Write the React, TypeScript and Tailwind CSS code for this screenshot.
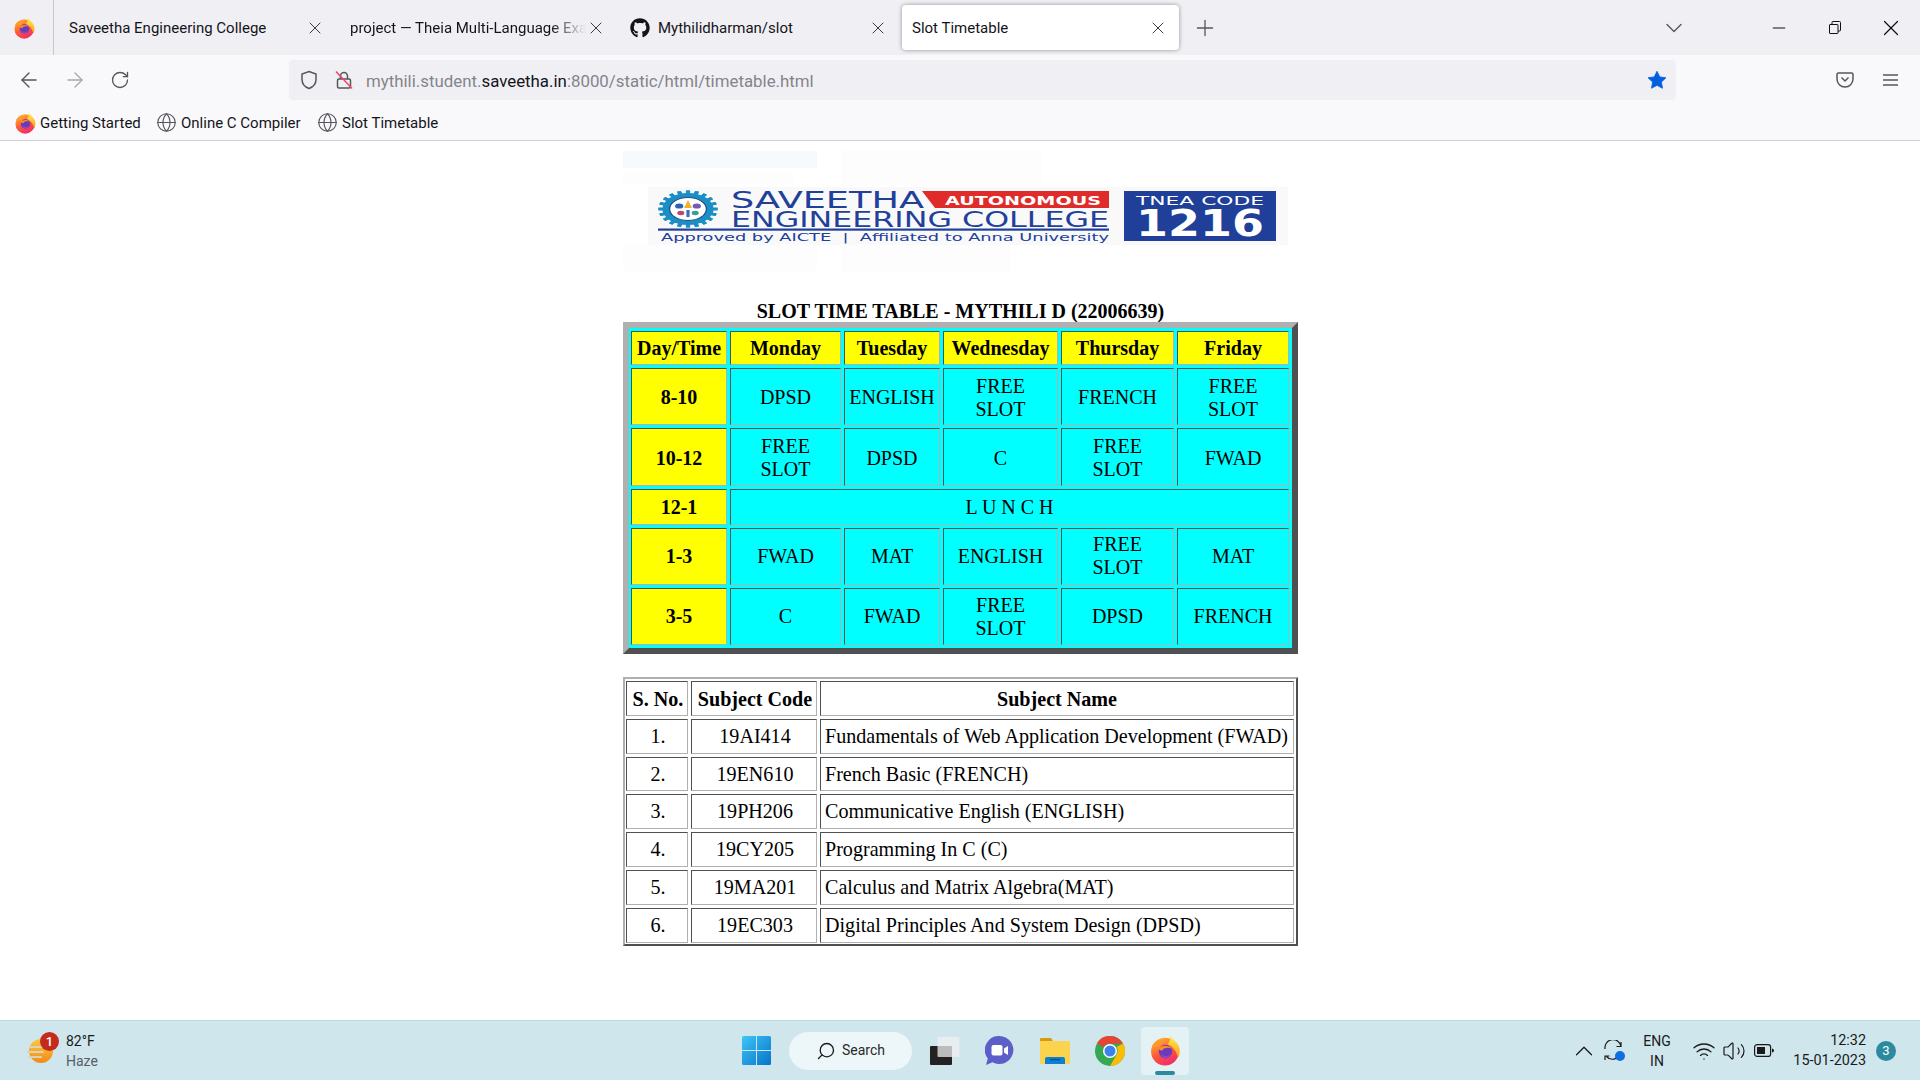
import { ArrowLeft, ArrowRight, RotateCw, X, Plus, ChevronDown, Minus, Globe, Search, ChevronUp, Wifi, Volume2 } from "lucide-react";
import { FaGithub } from "react-icons/fa";
import { Fragment } from "react";

function FF({ s = 20, id }: { s?: number; id: string }) {
  return (
    <svg width={s} height={s} viewBox="0 0 32 32" className="shrink-0">
      <defs>
        <linearGradient id={id + "a"} x1="0.2" y1="0" x2="0.7" y2="1">
          <stop offset="0" stopColor="#ffbd2e" />
          <stop offset="0.5" stopColor="#ff5a36" />
          <stop offset="1" stopColor="#ee2a6b" />
        </linearGradient>
        <linearGradient id={id + "b"} x1="0" y1="0" x2="0" y2="1">
          <stop offset="0" stopColor="#fff44f" />
          <stop offset="1" stopColor="#ff9d1e" />
        </linearGradient>
      </defs>
      <circle cx="15.5" cy="18" r="13.5" fill={`url(#${id}a)`} />
      <path d="M20 1c1 4 5 6 8 10 3 5 2 11 0 13-1-6-5-11-10-13 3-3 3-7 2-10z" fill={`url(#${id}b)`} />
      <path d="M3 12c3-4 8-6 12-5-3 2-4 4-4 6-3 0-6 0-8-1z" fill="#ff9a2e" />
      <circle cx="16" cy="18" r="6.5" fill="#6a3bb8" />
      <path d="M9 15c3-3 10-4 13 0-3-1-8-1-9 2-2 0-3-1-4-2z" fill="#ff8a1f" />
      <path d="M12 20c2 3 7 3 9 0 0 3-3 5-5 5s-4-2-4-5z" fill="#9c3fc6" />
    </svg>
  );
}

function Tab({ title, active, icon, cls, fade }: { title: string; active?: boolean; icon?: boolean; cls: string; fade?: boolean }) {
  return (
    <div className={`flex items-center h-[45px] w-[277px] shrink-0 rounded ${active ? "bg-white shadow-[0_0_4px_rgba(0,0,0,0.4)]" : ""} ${cls}`}>
      {icon && <FaGithub className="w-[20px] h-[20px] mr-[8px] text-[#15141a] shrink-0" />}
      <span className={`flex-1 whitespace-nowrap overflow-hidden text-[15px] pt-[2px] text-[#15141a] ${fade ? "[mask-image:linear-gradient(to_right,black_85%,transparent_100%)]" : ""}`}>{title}</span>
      <X className="w-[20px] h-[20px] shrink-0 text-[#2a2a2e]" strokeWidth={1.1} />
    </div>
  );
}

function Logo() {
  const blue = "#21409a";
  const teeth = Array.from({ length: 20 }, (_, i) => i * 18);
  return (
    <svg width="675" height="125" viewBox="0 0 675 125" className="block shrink-0">
      <rect x="0" y="1" width="194" height="17" fill="#f6fafd" />
      <rect x="0" y="22" width="170" height="12" fill="#fdfdfd" />
      <rect x="0" y="95" width="194" height="26" fill="#fdfdfe" />
      <rect x="218" y="0" width="200" height="36" fill="#fdfdfe" />
      <rect x="218" y="95" width="170" height="28" fill="#fdfdfe" />
      <rect x="25" y="37" width="640" height="58" fill="#f9f9fa" />
      <g transform="translate(65 59) scale(1.6 1)">
        {teeth.map((a) => (
          <rect key={a} x="-1.300" y="-18.500" width="2.600" height="37" fill="#1b8fc4" transform={`rotate(${a})`} />
        ))}
        <circle r="16" fill="#1b8fc4" />
        <circle r="11.500" fill="#fff" />
        <circle r="11.500" fill="none" stroke="#1c4f8f" strokeWidth="0.8" />
        <circle cx="-5.500" cy="-3" r="2.600" fill="#2a62b8" />
        <circle cx="5.500" cy="-3" r="2.600" fill="#6f5db5" />
        <path d="M0 -9l2.500 8h-5z" fill="#f0b429" />
        <circle cx="-4.500" cy="4" r="2.200" fill="#c0476a" />
        <path d="M-1 1h2v7h-2z" fill="#3a6fc0" />
        <circle cx="4.500" cy="4" r="2.200" fill="#3a9f8f" />
      </g>
      <path d="M299 41h187v17H312z" fill="#e02b2b" />
      <g fontFamily="'DejaVu Sans', sans-serif">
        <text x="108" y="58" fontSize="23" fill={blue} textLength="193" lengthAdjust="spacingAndGlyphs">SAVEETHA</text>
        <text x="322" y="54.500" fontSize="12.600" fontWeight="700" fill="#fff" textLength="156" lengthAdjust="spacingAndGlyphs">AUTONOMOUS</text>
        <text x="108" y="76.500" fontSize="21" fill={blue} textLength="378" lengthAdjust="spacingAndGlyphs">ENGINEERING COLLEGE</text>
        <text x="38" y="91" fontSize="10.500" fill={blue} textLength="448" lengthAdjust="spacingAndGlyphs" className="whitespace-pre">Approved by AICTE  |  Affiliated to Anna University</text>
      </g>
      <rect x="35" y="78.500" width="451" height="2.200" fill={blue} />
      <rect x="501" y="41" width="152" height="50" fill="#1f3f98" />
      <g fontFamily="'DejaVu Sans', sans-serif" fill="#fff">
        <text x="513" y="55" fontSize="12.500" textLength="128" lengthAdjust="spacingAndGlyphs">TNEA CODE</text>
        <text x="513" y="86" fontSize="37" fontWeight="700" textLength="128" lengthAdjust="spacingAndGlyphs">1216</text>
      </g>
    </svg>
  );
}

const tCell = "border border-t-[#505050] border-l-[#505050] border-r-[#b0b0b0] border-b-[#b0b0b0] p-0 text-center";
const head = ["Day/Time", "Monday", "Tuesday", "Wednesday", "Thursday", "Friday"];
const FS = "FREE SLOT";
const rows: { h: string; pad: string; time: string; cells: string[] }[] = [
  { h: "h-[57px]", pad: "pt-[2px]", time: "8-10", cells: ["DPSD", "ENGLISH", FS, "FRENCH", FS] },
  { h: "h-[58px]", pad: "pt-[2px]", time: "10-12", cells: [FS, "DPSD", "C", FS, "FWAD"] },
  { h: "h-[36px]", pad: "", time: "12-1", cells: [] },
  { h: "h-[57px]", pad: "", time: "1-3", cells: ["FWAD", "MAT", "ENGLISH", FS, "MAT"] },
  { h: "h-[57px]", pad: "", time: "3-5", cells: ["C", "FWAD", FS, "DPSD", "FRENCH"] },
];

function Timetable() {
  return (
    <div className="w-[675px] h-[332px] border-[6px] border-t-[#b0b0b0] border-l-[#b0b0b0] border-r-[#505050] border-b-[#505050] bg-[#00ffff]">
      <table className="table-fixed border-separate border-spacing-[3px] w-[664px] -ml-px text-[20px] leading-[23px] text-black">
        <colgroup>
          <col className="w-[96px]" />
          <col className="w-[111px]" />
          <col className="w-[96px]" />
          <col className="w-[115px]" />
          <col className="w-[113px]" />
          <col className="w-[112px]" />
        </colgroup>
        <tbody>
          <tr>
            {head.map((h) => (
              <th key={h} className={`${tCell} h-[34px] bg-[#ffff00] font-bold whitespace-nowrap`}>{h}</th>
            ))}
          </tr>
          {rows.map((r) => (
            <tr key={r.time}>
              <th className={`${tCell} ${r.h} ${r.pad} bg-[#ffff00] font-bold`}>{r.time}</th>
              {r.time === "12-1" ? (
                <td colSpan={5} className={tCell}>L U N C H</td>
              ) : (
                r.cells.map((c, i) => (
                  <td key={i} className={`${tCell} ${r.pad} ${r.time === "1-3" && c === FS ? "pb-[2px]" : ""}`}>
                    {c === FS ? (
                      <Fragment>FREE<br />SLOT</Fragment>
                    ) : c}
                  </td>
                ))
              )}
            </tr>
          ))}
        </tbody>
      </table>
    </div>
  );
}

const subs = [
  ["1.", "19AI414", "Fundamentals of Web Application Development (FWAD)", "h-[35px]"],
  ["2.", "19EN610", "French Basic (FRENCH)", "h-[34px]"],
  ["3.", "19PH206", "Communicative English (ENGLISH)", "h-[35px]"],
  ["4.", "19CY205", "Programming In C (C)", "h-[35px]"],
  ["5.", "19MA201", "Calculus and Matrix Algebra(MAT)", "h-[35px]"],
  ["6.", "19EC303", "Digital Principles And System Design (DPSD)", "h-[35px]"],
];

function Subjects() {
  return (
    <div className="w-[675px] h-[269px] mt-[23px] border-2 border-t-[#b0b0b0] border-l-[#b0b0b0] border-r-[#505050] border-b-[#505050]">
      <table className="table-fixed border-separate border-spacing-[3px] w-[674px] -ml-[2px] -mt-px text-[20.100px] leading-[23px] text-black">
        <colgroup>
          <col className="w-[62px]" />
          <col className="w-[126px]" />
          <col className="w-[474px]" />
        </colgroup>
        <tbody>
          <tr>
            <th className={`${tCell} h-[35px] pt-[2px] pl-[2px] font-bold whitespace-nowrap`}>S. No.</th>
            <th className={`${tCell} pt-[2px] pl-[2px] font-bold whitespace-nowrap`}>Subject Code</th>
            <th className={`${tCell} pt-[2px] font-bold`}>Subject Name</th>
          </tr>
          {subs.map((r) => (
            <tr key={r[0]}>
              <td className={`${tCell} pl-[2px] ${r[3]}`}>{r[0]}</td>
              <td className={`${tCell} pl-[2px]`}>{r[1]}</td>
              <td className={`${tCell} !text-left pl-[4px] whitespace-nowrap`}>{r[2]}</td>
            </tr>
          ))}
        </tbody>
      </table>
    </div>
  );
}

export default function App() {
  return (
    <div className="w-[1920px] h-[1080px] overflow-hidden flex flex-col bg-white font-['Roboto',sans-serif]">
      {/* tab strip */}
      <div className="h-[55px] bg-[#f0f0f4] flex items-start shrink-0">
        <div className="w-[54px] h-[55px] border-r border-[#c8c8c8] flex items-center pl-[13px] pb-[1px] shrink-0">
          <FF s={23} id="t" />
        </div>
        <div className="flex gap-[6px] pt-[5px] -ml-[1px]">
          <Tab title="Saveetha Engineering College" cls="pl-[16px] pr-[5px]" />
          <Tab title="project — Theia Multi-Language Example" cls="pl-[14px] pr-[7px]" fade />
          <Tab title="Mythilidharman/slot" icon cls="pl-[11px] pr-[8px]" />
          <Tab title="Slot Timetable" active cls="pl-[10px] pr-[11px]" />
        </div>
        <div className="flex items-center h-[55px] flex-1">
          <Plus className="w-[26px] h-[26px] ml-[13px] text-[#55555c]" strokeWidth={1.2} />
          <ChevronDown className="w-[28px] h-[28px] ml-[442px] text-[#55555c]" strokeWidth={1.2} />
          <Minus className="w-[20px] h-[20px] ml-[81px] text-[#111]" strokeWidth={1.2} />
          <svg width="12" height="13" viewBox="0 0 12 13" className="ml-[40px]" fill="none" stroke="#111" strokeWidth="1">
            <rect x="0.500" y="3.500" width="8.500" height="9" rx="0.500" />
            <path d="M3 3V1.500a1 1 0 0 1 1-1h6.500a1 1 0 0 1 1 1V9a1 1 0 0 1-1 1H9" />
          </svg>
          <X className="w-[26px] h-[26px] ml-[37px] text-[#111]" strokeWidth={1.1} />
        </div>
      </div>
      {/* nav bar */}
      <div className="h-[50px] bg-[#f9f9fb] flex items-center shrink-0">
        <ArrowLeft className="w-[24px] h-[24px] ml-[17px] text-[#55555c]" strokeWidth={1.4} />
        <ArrowRight className="w-[24px] h-[24px] ml-[22px] text-[#a8a8ad]" strokeWidth={1.4} />
        <RotateCw className="w-[20px] h-[20px] ml-[23px] text-[#55555c]" strokeWidth={1.6} />
        <div className="w-[1387px] h-[40px] ml-[159px] bg-[#f0f0f4] rounded flex items-center">
          <svg width="18" height="20" viewBox="0 0 18 20" className="ml-[11px]" fill="none" stroke="#55555c" strokeWidth="1.5">
            <path d="M9 1.500l7 2.500v5.500c0 4.500-3 7.500-7 9-4-1.500-7-4.500-7-9V4z" />
          </svg>
          <svg width="18" height="20" viewBox="0 0 18 20" className="ml-[17px]" fill="none">
            <rect x="2.500" y="9" width="13" height="9" rx="1.500" stroke="#55555c" strokeWidth="1.5" />
            <path d="M5.500 9V6a3.500 3.500 0 0 1 7 0v3" stroke="#55555c" strokeWidth="1.5" />
            <path d="M1 1.500 17 18.500" stroke="#f0456a" strokeWidth="1.5" />
          </svg>
          <span className="ml-[13px] pt-[4px] text-[16.850px] text-[#84848a] whitespace-nowrap">mythili.student.<span className="text-[#15141a]">saveetha.in</span>:8000/static/html/timetable.html</span>
          <svg width="20" height="20" viewBox="0 0 24 24" className="ml-auto mr-[9px]" fill="#0060df">
            <path d="M12 1.500l3.300 6.800 7.400 1-5.400 5.200 1.300 7.400L12 18.400l-6.600 3.500 1.300-7.400L1.300 9.300l7.400-1z" stroke="#0060df" strokeWidth="1" strokeLinejoin="round" />
          </svg>
        </div>
        <svg width="18" height="16" viewBox="0 0 18 16" className="ml-[160px]" fill="none" stroke="#55555c" strokeWidth="1.5">
          <path d="M2.500 1h13a1.500 1.500 0 0 1 1.500 1.500V7a8 8 0 0 1-16 0V2.500A1.500 1.500 0 0 1 2.500 1z" />
          <path d="M5.500 5.500 9 9l3.500-3.500" />
        </svg>
        <svg width="15" height="12" viewBox="0 0 15 12" className="ml-[29px]" stroke="#55555c" strokeWidth="1.5">
          <path d="M0 1h15M0 6h15M0 11h15" />
        </svg>
      </div>
      {/* bookmarks */}
      <div className="h-[36px] bg-[#f9f9fb] border-b border-[#cfcfd8] flex items-center shrink-0 text-[15px] text-[#15141a] whitespace-nowrap">
        <div className="ml-[14px] w-[21px]"><FF s={23} id="b" /></div>
        <span className="ml-[5px] w-[101px] pt-[2px]">Getting Started</span>
        <Globe className="w-[21px] h-[21px] ml-[15px] text-[#55555c]" strokeWidth={1.3} />
        <span className="ml-[4px] w-[122px] pt-[2px]">Online C Compiler</span>
        <Globe className="w-[21px] h-[21px] ml-[14px] text-[#55555c]" strokeWidth={1.3} />
        <span className="ml-[4px] pt-[2px]">Slot Timetable</span>
      </div>
      {/* page */}
      <main className="flex-1 flex flex-col items-center pl-px pt-[9px] font-['Liberation_Serif',serif] bg-white">
        <Logo />
        <div className="mt-[25px] h-[22px] text-[20px] leading-[23px] font-bold text-black whitespace-nowrap">SLOT TIME TABLE - MYTHILI D (22006639)</div>
        <Timetable />
        <Subjects />
      </main>
      {/* taskbar */}
      <div className="h-[60px] bg-[#cfe6ed] border-t border-[#bcd9e2] flex items-center shrink-0 text-[#1a1a1a]">
        <div className="w-[742px] pl-[27px] flex items-center shrink-0">
          <div className="relative w-[26px] h-[26px] shrink-0">
            <svg width="26" height="26" viewBox="0 0 26 26">
              <defs>
                <linearGradient id="sun" x1="0" y1="0" x2="0" y2="1">
                  <stop offset="0" stopColor="#fcc83a" />
                  <stop offset="1" stopColor="#f28a1b" />
                </linearGradient>
              </defs>
              <circle cx="14" cy="13" r="12" fill="url(#sun)" />
              <path d="M3 9h14M0 14h16M2 19h12" stroke="#d9d4b8" strokeWidth="2" strokeLinecap="round" />
            </svg>
            <div className="absolute left-[13px] -top-[6px] w-[19px] h-[19px] rounded-full bg-[#c42b1c] text-white text-[13px] leading-[19px] text-center font-medium">1</div>
          </div>
          <div className="ml-[13px] flex flex-col text-[14px] leading-[20px]">
            <span>82°F</span>
            <span className="text-[#555f63]">Haze</span>
          </div>
        </div>
        <svg width="29" height="29" viewBox="0 0 29 29" className="shrink-0">
          <defs>
            <linearGradient id="win" x1="0" y1="0" x2="1" y2="1">
              <stop offset="0" stopColor="#3fc6f7" />
              <stop offset="1" stopColor="#0673c9" />
            </linearGradient>
          </defs>
          <path d="M0 1.500A1.500 1.500 0 0 1 1.500 0H14v14H0zM15 0h12.500A1.500 1.500 0 0 1 29 1.500V14H15zM0 15h14v14H1.500A1.500 1.500 0 0 1 0 27.500zM15 15h14v12.500a1.500 1.500 0 0 1-1.500 1.500H15z" fill="url(#win)" />
        </svg>
        <div className="ml-[18px] w-[123px] h-[38px] rounded-full bg-[#edf6f9] flex items-center shrink-0">
          <Search className="w-[20px] h-[20px] ml-[27px] text-[#1a1a1a] -scale-x-100" strokeWidth={1.6} />
          <span className="ml-[6px] text-[14px] text-[#2a2a2a]">Search</span>
        </div>
        <svg width="30" height="28" viewBox="0 0 30 28" className="ml-[18px] shrink-0">
          <rect x="0" y="9" width="22" height="19" rx="1" fill="#222" />
          <rect x="7.500" y="0" width="22" height="20" rx="1" fill="#f0f0f0" fillOpacity="0.750" />
        </svg>
        <svg width="29" height="29" viewBox="0 0 29 29" className="ml-[25px] shrink-0">
          <path d="M14.500 0a14 14 0 1 1-7 26.200L1 29l1.800-6.500A14 14 0 0 1 14.500 0z" fill="#5b5fc7" />
          <rect x="6.500" y="9" width="11" height="10.500" rx="2" fill="#fff" />
          <path d="M19 12.500l4-2.500v9l-4-2.500z" fill="#fff" />
        </svg>
        <svg width="30" height="27" viewBox="0 0 30 27" className="ml-[26px] shrink-0">
          <path d="M0 2a1 1 0 0 1 1-1h10l2 3H0z" fill="#d99a0b" />
          <path d="M0 4h29a1 1 0 0 1 1 1v21a1 1 0 0 1-1 1H1a1 1 0 0 1-1-1z" fill="#fbd34d" />
          <path d="M5 27v-5a2 2 0 0 1 2-2h16a2 2 0 0 1 2 2v5z" fill="#0f7fd1" />
          <rect x="10" y="22" width="10" height="1.300" fill="#0b4f8a" />
        </svg>
        <svg width="30" height="30" viewBox="0 0 30 30" className="ml-[25px] shrink-0">
          <circle cx="15" cy="15" r="15" fill="#34a853" />
          <path d="M15 0a15 15 0 0 1 13 7.500H15a7.500 7.500 0 0 0-6.500 3.750L2 7A15 15 0 0 1 15 0z" fill="#ea4335" />
          <path d="M28 7.500A15 15 0 0 1 15 30l6.500-11.250A7.500 7.500 0 0 0 21.500 11z" fill="#fbbc05" />
          <circle cx="15" cy="15" r="7" fill="#fff" />
          <circle cx="15" cy="15" r="5.500" fill="#3b82f0" />
        </svg>
        <div className="relative ml-[16px] w-[48px] h-[48px] rounded bg-[#e4f1f5] flex justify-center pt-[6px] shrink-0">
          <FF s={33} id="k" />
          <div className="absolute left-[14px] bottom-0 w-[20px] h-[4px] rounded-full bg-[#2b8a9e]" />
        </div>
        <ChevronUp className="w-[30px] h-[30px] ml-[380px] text-[#1a1a1a] shrink-0" strokeWidth={1} />
        <div className="relative ml-[5px] w-[20px] h-[21px] shrink-0">
          <svg width="20" height="21" viewBox="0 0 20 21" fill="none" stroke="#1a1a1a" strokeWidth="1.2">
            <path d="M1 9A8 8 0 0 1 17 6.500M17 2v4.500h-4.500" />
            <path d="M16 14A8 8 0 0 1 2.500 16.500M1 20v-4h4.500" />
          </svg>
          <div className="absolute -right-[1px] bottom-0 w-[10px] h-[10px] rounded-full bg-[#0f6fe0]" />
        </div>
        <div className="ml-[19px] w-[28px] flex flex-col items-center text-[14px] leading-[20px] shrink-0">
          <span>ENG</span>
          <span>IN</span>
        </div>
        <Wifi className="w-[24px] h-[24px] ml-[21px] text-[#1a1a1a] shrink-0" strokeWidth={1.3} />
        <Volume2 className="w-[24px] h-[24px] ml-[6px] text-[#1a1a1a] shrink-0" strokeWidth={1.2} />
        <svg width="20" height="13" viewBox="0 0 20 13" className="ml-[8px] shrink-0" fill="none">
          <rect x="0.600" y="0.600" width="16" height="11.800" rx="2.500" stroke="#1a1a1a" strokeWidth="1.200" />
          <rect x="3" y="3" width="8" height="7" fill="#1a1a1a" />
          <path d="M18 4.500c1 0 2 1 2 2s-1 2-2 2z" fill="#1a1a1a" />
        </svg>
        <div className="ml-[19px] w-[73px] flex flex-col items-end text-[14.400px] leading-[20px] whitespace-nowrap shrink-0">
          <span>12:32</span>
          <span>15-01-2023</span>
        </div>
        <div className="ml-[10px] w-[20px] h-[20px] rounded-full bg-[#2b8a9e] text-white text-[13px] leading-[20px] text-center shrink-0">3</div>
      </div>
    </div>
  );
}
